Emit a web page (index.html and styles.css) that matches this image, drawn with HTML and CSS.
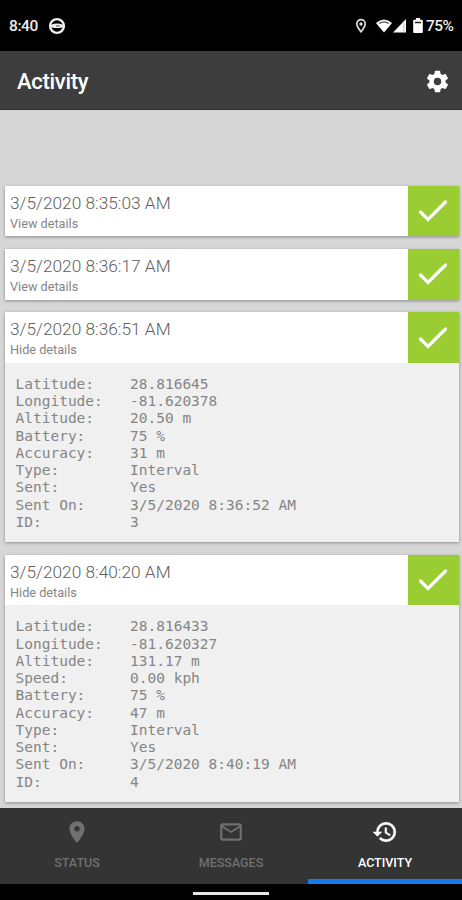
FILE: index.html
```html
<!DOCTYPE html>
<html lang="en">
<head>
  <meta charset="UTF-8" />
  <title>Activity</title>
  <meta name="viewport" content="width=device-width, initial-scale=1.0" />
  <link rel="stylesheet" href="styles.css">
</head>
<body>

  <div class="status-bar">
    <span class="clock">8:40</span>
    <svg class="app-dot" viewBox="0 0 18 18">
      <circle cx="9" cy="9" r="6.9" fill="none" stroke="#eee" stroke-width="2.4" />
      <path d="M3 7.8q6-2.600 12 0v2.400q-6 1.800-12 0z" fill="#eee" />
      <path d="M8 9h4" stroke="#555" stroke-width="1" />
    </svg>
    <div class="indicators">
      <svg class="loc" viewBox="0 0 12 16">
        <path d="M6 1.600a4.200 4.200 0 0 0-4.200 4.200C1.800 8.600 6 13.800 6 13.800s4.200-5.200 4.200-8A4.200 4.200 0 0 0 6 1.600z" fill="none" stroke="#ddd" stroke-width="1.7" />
        <circle cx="6" cy="6" r="1.7" fill="#ddd" />
      </svg>
      <svg class="wifi" viewBox="0 0 16 14">
        <path d="M0 4Q8-3.200 16 4L8 13.500z" fill="#fff" />
        <path d="M3.200 4.600Q8 1.300 12.800 4.600" fill="none" stroke="#555" stroke-width="1.2" />
      </svg>
      <svg class="signal" viewBox="0 0 13 14">
        <path d="M13 0v13.500H0z" fill="#fff" />
        <path d="M11 4v9" stroke="#bbb" stroke-width="1" />
      </svg>
      <svg class="battery" viewBox="0 0 10 16">
        <path d="M3 0h4v1.700h1.800q1 0 1 1V14q0 1-1 1H1.200q-1 0-1-1V2.700q0-1 1-1H3z" fill="#fff" />
        <path d="M2 4.500h6" stroke="#222" stroke-width="1.5" />
      </svg>
      <span class="percent">75%</span>
    </div>
  </div>

  <header class="app-bar">
    <h1>Activity</h1>
    <svg class="gear" viewBox="0 0 24 24">
      <path fill="#fff" d="M19.140 12.940c.04-.3.06-.61.06-.94 0-.32-.02-.64-.07-.94l2.030-1.580c.18-.14.23-.41.12-.61l-1.920-3.320c-.12-.22-.37-.29-.59-.22l-2.390.96c-.5-.38-1.030-.7-1.620-.94l-.36-2.540c-.04-.24-.24-.41-.48-.41h-3.840c-.24 0-.43.17-.47.41l-.36 2.540c-.59.24-1.130.57-1.620.94l-2.390-.96c-.22-.08-.47 0-.59.22L2.740 8.870c-.12.21-.08.47.12.61l2.030 1.580c-.05.3-.09.63-.09.94s.02.64.07.94l-2.030 1.580c-.18.14-.23.41-.12.61l1.920 3.320c.12.22.37.29.59.22l2.390-.96c.5.38 1.030.7 1.620.94l.36 2.540c.05.24.24.41.48.41h3.840c.24 0 .44-.17.47-.41l.36-2.540c.59-.24 1.130-.56 1.620-.94l2.390.96c.22.08.47 0 .59-.22l1.920-3.320c.12-.22.07-.47-.12-.61zM12 15.300A3.300 3.300 0 1 1 12 8.700a3.300 3.300 0 0 1 0 6.600z" />
    </svg>
  </header>

  <main class="list">
    <div class="card">
      <div class="card-head">
        <div class="card-text">
          <div class="time">3/5/2020 8:35:03 AM</div>
          <div class="toggle">View details</div>
        </div>
        <div class="check"><svg viewBox="0 0 28 22"><path d="M1.500 12l7.500 7.500L26.500 2" /></svg></div>
      </div>
    </div>

    <div class="card">
      <div class="card-head">
        <div class="card-text">
          <div class="time">3/5/2020 8:36:17 AM</div>
          <div class="toggle">View details</div>
        </div>
        <div class="check"><svg viewBox="0 0 28 22"><path d="M1.500 12l7.500 7.500L26.500 2" /></svg></div>
      </div>
    </div>

    <div class="card">
      <div class="card-head">
        <div class="card-text">
          <div class="time">3/5/2020 8:36:51 AM</div>
          <div class="toggle">Hide details</div>
        </div>
        <div class="check"><svg viewBox="0 0 28 22"><path d="M1.500 12l7.500 7.500L26.500 2" /></svg></div>
      </div>
      <dl class="details">
        <dt>Latitude:</dt><dd>28.816645</dd>
        <dt>Longitude:</dt><dd>-81.620378</dd>
        <dt>Altitude:</dt><dd>20.50 m</dd>
        <dt>Battery:</dt><dd>75 %</dd>
        <dt>Accuracy:</dt><dd>31 m</dd>
        <dt>Type:</dt><dd>Interval</dd>
        <dt>Sent:</dt><dd>Yes</dd>
        <dt>Sent On:</dt><dd>3/5/2020 8:36:52 AM</dd>
        <dt>ID:</dt><dd>3</dd>
      </dl>
    </div>

    <div class="card">
      <div class="card-head">
        <div class="card-text">
          <div class="time">3/5/2020 8:40:20 AM</div>
          <div class="toggle">Hide details</div>
        </div>
        <div class="check"><svg viewBox="0 0 28 22"><path d="M1.500 12l7.500 7.500L26.500 2" /></svg></div>
      </div>
      <dl class="details">
        <dt>Latitude:</dt><dd>28.816433</dd>
        <dt>Longitude:</dt><dd>-81.620327</dd>
        <dt>Altitude:</dt><dd>131.17 m</dd>
        <dt>Speed:</dt><dd>0.00 kph</dd>
        <dt>Battery:</dt><dd>75 %</dd>
        <dt>Accuracy:</dt><dd>47 m</dd>
        <dt>Type:</dt><dd>Interval</dd>
        <dt>Sent:</dt><dd>Yes</dd>
        <dt>Sent On:</dt><dd>3/5/2020 8:40:19 AM</dd>
        <dt>ID:</dt><dd>4</dd>
      </dl>
    </div>
  </main>

  <nav class="tabs">
    <div class="tab">
      <svg viewBox="0 0 24 24"><path fill="currentColor" d="M12 2C8.130 2 5 5.130 5 9c0 5.250 7 13 7 13s7-7.750 7-13c0-3.870-3.130-7-7-7zm0 9.500a2.500 2.500 0 0 1 0-5 2.500 2.500 0 0 1 0 5z" /></svg>
      <span>STATUS</span>
    </div>
    <div class="tab">
      <svg viewBox="0 0 24 24"><path fill="currentColor" d="M20 4H4c-1.100 0-1.990.9-1.990 2L2 18c0 1.100.9 2 2 2h16c1.100 0 2-.9 2-2V6c0-1.100-.9-2-2-2zm0 14H4V8l8 5 8-5v10zm-8-7L4 6h16l-8 5z" /></svg>
      <span>MESSAGES</span>
    </div>
    <div class="tab active">
      <svg viewBox="0 0 24 24"><path fill="currentColor" stroke="currentColor" stroke-width=".5" d="M13 3a9 9 0 0 0-9 9H1l3.890 3.890.07.14L9 12H6c0-3.870 3.130-7 7-7s7 3.130 7 7-3.130 7-7 7c-1.930 0-3.680-.79-4.940-2.060l-1.420 1.420A8.954 8.954 0 0 0 13 21a9 9 0 0 0 0-18zm-1 5v5l4.280 2.540.72-1.210-3.500-2.080V8H12z" /></svg>
      <span>ACTIVITY</span>
    </div>
  </nav>

  <div class="nav-bar"><div class="home-pill"></div></div>

</body>
</html>
```

FILE: styles.css
```css
* {
  box-sizing: border-box;
}
body {
  margin: 0;
  height: 900px;
  display: flex;
  flex-direction: column;
  overflow: hidden;
  background: #d6d6d6;
  font-family: Roboto, sans-serif;
}
svg {
  display: block;
  flex: none;
}

/* system bar */
.status-bar {
  height: 51px;
  flex: none;
  display: flex;
  align-items: center;
  padding: 1px 8px 0 9px;
  background: #000;
  color: #eee;
  font-size: 15.5px;
  font-weight: 500;
}
.clock {
  width: 39px;
  letter-spacing: -0.4px;
}
.app-dot {
  width: 18px;
  height: 18px;
}
.indicators {
  display: flex;
  align-items: center;
  margin-left: auto;
}
.loc {
  width: 12px;
  height: 16px;
  margin-right: 9px;
}
.wifi {
  width: 16px;
  height: 14px;
  margin-right: 1px;
}
.signal {
  width: 13px;
  height: 14px;
  margin-right: 7px;
}
.battery {
  width: 10px;
  height: 16px;
  margin-right: 3px;
}
.percent {
  width: 28px;
  letter-spacing: -0.6px;
}

.app-bar {
  height: 59px;
  flex: none;
  display: flex;
  align-items: center;
  justify-content: space-between;
  padding: 2px 11px 0 17px;
  background: #3d3d3d;
  border-bottom: 1px solid #303030;
}
.app-bar h1 {
  margin: 0;
  color: #fff;
  font-size: 22px;
  font-weight: 500;
  letter-spacing: -0.3px;
}
.gear {
  width: 27px;
  height: 27px;
}

/* activity cards */
.list {
  flex: 1;
  min-height: 0;
  display: flex;
  flex-direction: column;
  gap: 12.7px;
  padding: 75.7px 3.5px 0 4.5px;
}
.card {
  flex: none;
  background: #f0f0f0;
  box-shadow: 0 1px 3px rgba(0, 0, 0, 0.35);
}
.card-head {
  display: flex;
  height: 50.6px;
  background: #fff;
}
.card-text {
  flex: 1;
  padding: 7px 0 0 5.5px;
  color: #606060;
}
.time {
  font-size: 17.3px;
  font-weight: 300;
  line-height: 21px;
}
.toggle {
  margin-top: 2px;
  font-size: 12.7px;
  line-height: 16px;
  color: #858585;
}
.check {
  width: 50.5px;
  display: flex;
  align-items: center;
  justify-content: center;
  background: #9acd32;
}
.check svg {
  width: 28px;
  height: 22px;
}
.check path {
  fill: none;
  stroke: #fff;
  stroke-width: 3.2;
  stroke-linecap: round;
}
.details {
  display: grid;
  grid-template-columns: 114.5px 1fr;
  margin: 0;
  padding: 13px 11px 11px;
  font-family: "DejaVu Sans Mono", monospace;
  font-size: 14.5px;
  line-height: 17.25px;
  color: #858585;
}
.details dd {
  margin: 0;
}

.tabs {
  height: 76.5px;
  flex: none;
  display: flex;
  background: #343434;
}
.tab {
  flex: 1;
  display: flex;
  flex-direction: column;
  align-items: center;
  padding-top: 11.5px;
  color: #707070;
  font-size: 12.5px;
  font-weight: 500;
}
.tab svg {
  width: 26px;
  height: 26px;
}
.tab span {
  margin-top: 9.5px;
  line-height: 16px;
}
.tab.active {
  color: #fff;
  border-bottom: 5px solid #137bee;
}

.nav-bar {
  height: 16px;
  flex: none;
  display: flex;
  justify-content: center;
  padding-top: 7.5px;
  background: #000;
}
.home-pill {
  width: 76px;
  height: 3.5px;
  background: #e6e6e6;
}
```
